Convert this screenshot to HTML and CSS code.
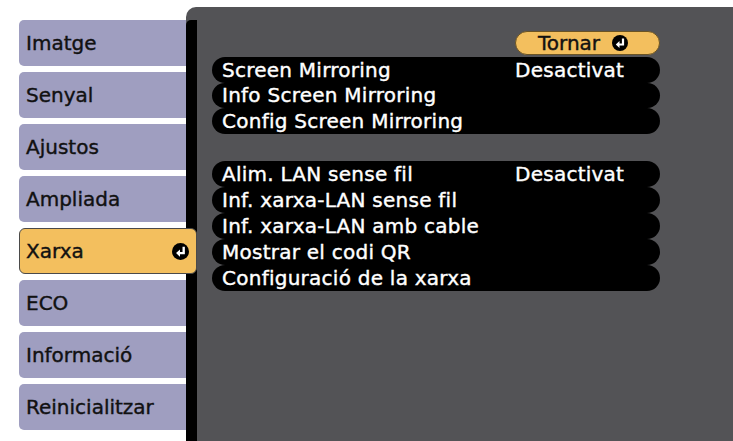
FILE: index.html
```html
<!DOCTYPE html>
<html lang="ca">
  <head>
    <meta charset="UTF-8" />
    <meta name="viewport" content="width=device-width, initial-scale=1.0" />
    <title>Xarxa</title>
    <link rel="stylesheet" href="styles.css">
  </head>
  <body>
    <div class="screen">
      <nav class="tabs">
        <div class="tab">Imatge</div>
        <div class="tab">Senyal</div>
        <div class="tab">Ajustos</div>
        <div class="tab">Ampliada</div>
        <div class="tab active">
          Xarxa
          <svg class="enter" width="17" height="17" viewBox="0 0 16 16">
            <circle cx="8" cy="8" r="8" fill="#000" />
            <path d="M11 3.5V9.5H6" fill="none" stroke="#fff" stroke-width="2.2" />
            <path d="M7.5 6L3.8 9.5L7.5 13Z" fill="#fff" />
          </svg>
        </div>
        <div class="tab">ECO</div>
        <div class="tab">Informació</div>
        <div class="tab">Reinicialitzar</div>
      </nav>

      <section class="panel">
        <div class="rail"></div>
        <div class="content">
          <div class="top">
            <button class="back">
              Tornar
              <svg class="enter" width="16" height="16" viewBox="0 0 16 16">
                <circle cx="8" cy="8" r="8" fill="#000" />
                <path d="M11 3.5V9.5H6" fill="none" stroke="#fff" stroke-width="2.2" />
                <path d="M7.5 6L3.8 9.5L7.5 13Z" fill="#fff" />
              </svg>
            </button>
          </div>

          <ul class="group">
            <li class="row"><span>Screen Mirroring</span><span>Desactivat</span></li>
            <li class="row"><span>Info Screen Mirroring</span></li>
            <li class="row"><span>Config Screen Mirroring</span></li>
          </ul>

          <ul class="group wide">
            <li class="row"><span>Alim. LAN sense fil</span><span>Desactivat</span></li>
            <li class="row"><span>Inf. xarxa-LAN sense fil</span></li>
            <li class="row"><span>Inf. xarxa-LAN amb cable</span></li>
            <li class="row"><span>Mostrar el codi QR</span></li>
            <li class="row"><span>Configuració de la xarxa</span></li>
          </ul>
        </div>
      </section>
    </div>
  </body>
</html>
```

FILE: styles.css
```css
body {
  margin: 0;
  background-color: #ffffff;
  font-family: "DejaVu Sans", sans-serif;
  font-size: 20px;
  color: #111111;
  -webkit-text-stroke: 0.4px currentColor;
}
.screen {
  display: flex;
  height: 441px;
  overflow: hidden;
}
.tabs {
  width: 167px;
  flex-shrink: 0;
  padding: 20px 0 0 19px;
  display: flex;
  flex-direction: column;
  gap: 6px;
}
.tab {
  height: 46px;
  box-sizing: border-box;
  background-color: #9f9ec0;
  border-radius: 5px 0 0 5px;
  padding-left: 7px;
  display: flex;
  align-items: center;
  line-height: 1;
}
.tab.active {
  background-color: #f3bf5e;
  border: 1px solid #4a4a4a;
  border-radius: 6px;
  margin-right: -11px;
  padding: 0 7px 0 6px;
  justify-content: space-between;
  position: relative;
  z-index: 1;
}
.enter {
  display: block;
  flex-shrink: 0;
}
.panel {
  flex: 1;
  margin-top: 7px;
  background-color: #535356;
  border-top-left-radius: 10px;
  display: flex;
}
.rail {
  width: 11px;
  margin-top: 13px;
  background-color: #000000;
  border-top-left-radius: 5px;
}
.content {
  width: 448px;
  padding: 24px 0 0 15px;
}
.top {
  display: flex;
  justify-content: flex-end;
  margin-bottom: 2px;
}
.back {
  width: 145px;
  height: 24px;
  box-sizing: border-box;
  background-color: #f3bf5e;
  border: 1px solid #6b5424;
  border-radius: 12px;
  padding: 0 0 0 22px;
  display: flex;
  align-items: center;
  gap: 12px;
  font: inherit;
  line-height: 1;
  color: #111111;
}
.group {
  list-style: none;
  margin: 0;
  padding: 0;
}
.group + .group {
  margin-top: 27px;
}
.row {
  height: 25.5px;
  box-sizing: border-box;
  background-color: #000000;
  border-radius: 13px;
  padding-left: 10px;
  display: grid;
  grid-template-columns: 293px 1fr;
  align-items: center;
  color: #ffffff;
  line-height: 1;
  letter-spacing: 0.25px;
  white-space: nowrap;
}
.group.wide .row {
  height: 26px;
}
```
